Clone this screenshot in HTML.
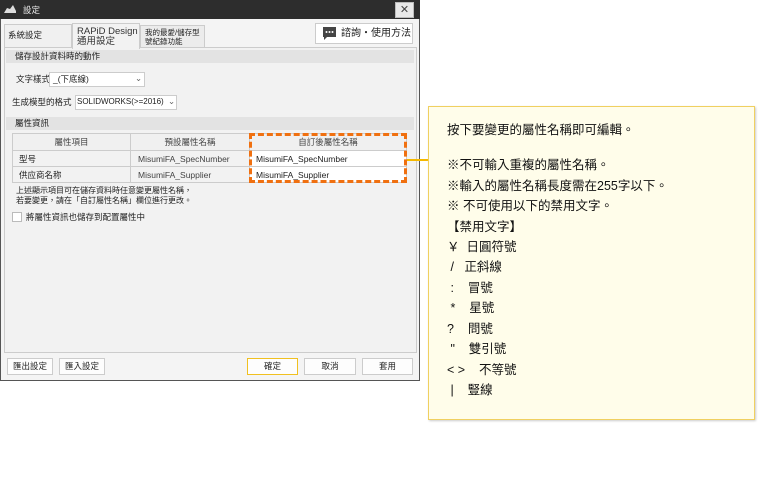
<!DOCTYPE html>
<html><head><meta charset="utf-8"><style>
*{box-sizing:border-box;margin:0;padding:0}
body{width:760px;height:500px;background:#fff;position:relative;font-family:"Liberation Sans","Noto Sans CJK TC",sans-serif;color:#222;overflow:hidden}
.a{position:absolute}
.t{position:absolute;font-size:8.5px;white-space:nowrap;line-height:1}
.btn{position:absolute;background:#fdfdfd;border:1px solid #ccc;font-size:8.5px;text-align:center;line-height:15px}
.cl{position:absolute;left:447px;font-size:12.5px;white-space:nowrap;line-height:1;color:#111}
</style></head><body>
<div class="a" style="left:0;top:0;width:420px;height:381px;background:#f4f4f4;border:1px solid #555"></div>
<div class="a" style="left:0;top:0;width:420px;height:19px;background:#2d2d2d"></div>
<svg class="a" style="left:4px;top:5px" width="12" height="9"><path d="M0 8 L3 3 L6 4 L9 0 L12 6 L12 8 Z" fill="#ddd"/></svg>
<div class="t" style="left:23px;top:6px;color:#eee">設定</div>
<div class="a" style="left:395px;top:2px;width:19px;height:16px;background:#e8e8e8;border:1px solid #bbb;font-size:11px;text-align:center;line-height:14px;color:#444">✕</div>
<div class="a" style="left:4px;top:24px;width:68px;height:24px;background:#f0f0f0;border:1px solid #ccc;border-bottom:none"></div>
<div class="t" style="left:8px;top:31px">系統設定</div>
<div class="a" style="left:140px;top:25px;width:65px;height:23px;background:#ececec;border:1px solid #ccc;border-bottom:none"></div>
<div class="t" style="left:145px;top:28px;font-size:7.5px;line-height:9px">我的最愛/儲存型<br>號紀錄功能</div>
<div class="a" style="left:4px;top:47px;width:413px;height:306px;background:#f2f2f2;border:1px solid #ccc"></div>
<div class="a" style="left:72px;top:23px;width:68px;height:26px;background:#f2f2f2;border:1px solid #ccc;border-bottom:none"></div>
<div class="t" style="left:77px;top:27px;font-size:9.5px;line-height:10px;color:#333">RAPiD Design<br>通用設定</div>
<div class="a" style="left:315px;top:23px;width:98px;height:21px;background:#fff;border:1px solid #ccc"></div>
<svg class="a" style="left:323px;top:27px" width="13" height="13"><path d="M0 0H13V10H4L1 13V10H0Z" fill="#444"/><circle cx="3.5" cy="5" r="1" fill="#fff"/><circle cx="6.5" cy="5" r="1" fill="#fff"/><circle cx="9.5" cy="5" r="1" fill="#fff"/></svg>
<div class="t" style="left:341px;top:29px;font-size:10px">諮詢・使用方法</div>
<div class="a" style="left:6px;top:50px;width:408px;height:13px;background:#e3e3e3"></div>
<div class="t" style="left:15px;top:52px">儲存設計資料時的動作</div>
<div class="t" style="left:16px;top:75px">文字樣式</div>
<div class="a" style="left:49px;top:72px;width:96px;height:15px;background:#fff;border:1px solid #ccc"></div>
<div class="t" style="left:53px;top:75px">_(下底線)</div>
<div class="t" style="left:135px;top:74px;color:#666">⌄</div>
<div class="t" style="left:12px;top:98px">生成模型的格式</div>
<div class="a" style="left:75px;top:95px;width:102px;height:15px;background:#fff;border:1px solid #ccc"></div>
<div class="t" style="left:77px;top:98px;font-size:8px">SOLIDWORKS(&gt;=2016)</div>
<div class="t" style="left:168px;top:97px;color:#666">⌄</div>
<div class="a" style="left:6px;top:117px;width:408px;height:13px;background:#e3e3e3"></div>
<div class="t" style="left:15px;top:119px">屬性資訊</div>
<table class="a" style="left:12px;top:133px;width:395px;border-collapse:collapse;font-size:8.5px;font-family:inherit">
<tr style="height:17px;background:#f0f0f0;color:#444"><td style="border:1px solid #ccc;width:118px;text-align:center">屬性項目</td><td style="border:1px solid #ccc;width:119px;text-align:center">預設屬性名稱</td><td style="border:1px solid #ccc;text-align:center">自訂後屬性名稱</td></tr>
<tr style="height:16px"><td style="border:1px solid #ccc;background:#f2f2f2;padding-left:6px">型号</td><td style="border:1px solid #ccc;background:#f2f2f2;padding-left:7px;color:#444">MisumiFA_SpecNumber</td><td style="border:1px solid #ccc;background:#fff;padding-left:6px">MisumiFA_SpecNumber</td></tr>
<tr style="height:16px"><td style="border:1px solid #ccc;background:#f2f2f2;padding-left:6px">供应商名称</td><td style="border:1px solid #ccc;background:#f2f2f2;padding-left:7px;color:#444">MisumiFA_Supplier</td><td style="border:1px solid #ccc;background:#fff;padding-left:6px">MisumiFA_Supplier</td></tr>
</table>
<div class="a" style="left:249px;top:133px;width:158px;height:50px;border:3px dashed #f07010"></div>
<div class="a" style="left:407px;top:159px;width:21px;height:2px;background:#f5b800"></div>
<div class="t" style="left:16px;top:187px;font-size:8px">上述顯示項目可在儲存資料時任意變更屬性名稱，</div>
<div class="t" style="left:16px;top:197px;font-size:8px">若要變更，請在「自訂屬性名稱」欄位進行更改。</div>
<div class="a" style="left:12px;top:212px;width:10px;height:10px;background:#fff;border:1px solid #bbb"></div>
<div class="t" style="left:26px;top:213px">將屬性資訊也儲存到配置屬性中</div>
<div class="btn" style="left:7px;top:358px;width:46px;height:17px">匯出設定</div>
<div class="btn" style="left:59px;top:358px;width:46px;height:17px">匯入設定</div>
<div class="btn" style="left:247px;top:358px;width:51px;height:17px;border-color:#f0c020">確定</div>
<div class="btn" style="left:304px;top:358px;width:52px;height:17px">取消</div>
<div class="btn" style="left:362px;top:358px;width:51px;height:17px">套用</div>
<div class="a" style="left:428px;top:106px;width:327px;height:314px;background:#fffdea;border:1px solid #f0d060;box-shadow:1px 1px 2px #ccc"></div>
<div class="cl" style="top:124px">按下要變更的屬性名稱即可編輯。</div>
<div class="cl" style="top:159px">※不可輸入重複的屬性名稱。</div>
<div class="cl" style="top:180px">※輸入的屬性名稱長度需在255字以下。</div>
<div class="cl" style="top:200px">※ 不可使用以下的禁用文字。</div>
<div class="cl" style="top:221px">【禁用文字】</div>
<div class="cl" style="top:241px">￥&nbsp;&nbsp;日圓符號</div>
<div class="cl" style="top:261px">&nbsp;/&nbsp;&nbsp;&nbsp;正斜線</div>
<div class="cl" style="top:282px">&nbsp;:&nbsp;&nbsp;&nbsp;&nbsp;冒號</div>
<div class="cl" style="top:302px">&nbsp;*&nbsp;&nbsp;&nbsp;&nbsp;星號</div>
<div class="cl" style="top:323px">?&nbsp;&nbsp;&nbsp;&nbsp;問號</div>
<div class="cl" style="top:343px">&nbsp;"&nbsp;&nbsp;&nbsp;&nbsp;雙引號</div>
<div class="cl" style="top:364px">&lt; &gt;&nbsp;&nbsp;&nbsp;&nbsp;不等號</div>
<div class="cl" style="top:384px">&nbsp;|&nbsp;&nbsp;&nbsp;&nbsp;豎線</div>
</body></html>
